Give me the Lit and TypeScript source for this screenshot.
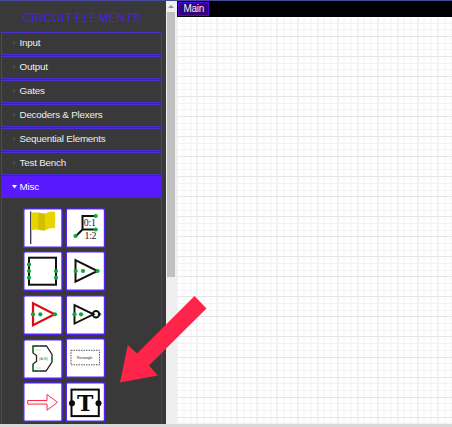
import { LitElement, html, css, svg } from "lit";
import { customElement } from "lit/decorators.js";

const dot = (x: number, y: number, r = 2.1) => svg`<circle cx=${x} cy=${y} r=${r} fill="#0fa838" />`;

const icons = [
  svg`<path d="M7.700 3.500V36" stroke="#34344a" stroke-width="1.300"/>
    <path d="M8.700 5C14 2.500 19 7.500 24 4.700C27 3.200 30 3.100 32 4V20.500C28 19.500 26 20.500 23 22C18 24 14 19.500 8.700 22.500Z" fill="#e6d500"/>
    <path d="M15 4.200Q19 6 22 5.500V22.300Q19 22.500 15 21Z" fill="#d2b900" opacity=".8"/>`,
  svg`<path d="M30 8H17V21.500H30M17 21.500L10.500 28" fill="none" stroke="#111" stroke-width="2"/>
    ${dot(30.2, 8)}${dot(30.2, 21.5)}${dot(10, 28)}
    <text x="18.300" y="17.800" class="nums" textLength="12">0:1</text><text x="19" y="31.300" class="nums" textLength="12">1:2</text>`,
  svg`<rect x="6" y="7" width="27" height="27" fill="none" stroke="#111" stroke-width="2"/>
    ${dot(6, 13.8)}${dot(6, 20.3)}${dot(6, 27)}${dot(33, 20.3)}${dot(33, 27)}`,
  svg`<path d="M10 9.500L32 20.300L10 31Z" fill="none" stroke="#111" stroke-width="2"/>
    ${dot(10.2, 20.3)}${dot(17.5, 20.3)}${dot(32, 20.3)}`,
  svg`<path d="M10 8.500L31.500 19.500L10 30.500Z" fill="none" stroke="#df0914" stroke-width="2.200"/>
    ${dot(10, 19.5)}${dot(17.3, 19.5)}${dot(32, 19.5)}`,
  svg`<path d="M9 10.300L28 19.500L9 28.700Z" fill="none" stroke="#111" stroke-width="1.900"/>
    ${dot(9, 19.5)}${dot(15.5, 19.5)}${dot(34, 19.5, 1.8)}
    <circle cx="30.500" cy="19.500" r="3.200" fill="none" stroke="#111" stroke-width="2"/>`,
  svg`<path d="M10 7.500H23.500L29 16V23.500L23 32.500H10V25.500L13.500 23V17L10 14.500Z" fill="none" stroke="#222" stroke-width="1.300"/>
    <path d="M10 7.500V14M10 26V32.500M28.800 18V22" stroke="#117c30" stroke-width="1"/>
    ${dot(16, 7.5, 1)}${dot(10, 10.5, 1)}${dot(10, 29.5, 1)}${dot(16, 32.5, 1)}${dot(29, 20, 1)}
    <path d="M12.500 11.500H18M12.500 29.500H18" stroke="#bbb" stroke-width=".6"/>
    <text x="15.800" y="21.300" class="alu">(A,B)</text>`,
  svg`<rect x="5.500" y="12.500" width="28.500" height="14.500" fill="none" stroke="#555" stroke-width="1" stroke-dasharray="1.500 1"/>
    <text x="19.200" y="21" class="rect">Rectangle</text>`,
  svg`<path d="M4.700 18.200H24V12.200L34.500 20L24 28V21.800H4.700Z" fill="none" stroke="#ff2b48" stroke-width="1"/>`,
  svg`<rect x="6" y="7.300" width="27.300" height="26.500" fill="none" stroke="#090909" stroke-width="2"/>
    <circle cx="6.500" cy="21" r="3" fill="#090909"/><circle cx="33" cy="21" r="3" fill="#090909"/>
    <text x="19.800" y="28.800" class="tee">T</text>`,
];

const iconShift = [0, -0.3, -0.2, -0.5, 0.3];

// Canvas lines sit on whole pixels; every third one is a major line.
const gridLines = (first: number, limit: number) => {
  const lines: { at: number; color: string }[] = [];
  for (let k = 0; first + (k * 20.04) / 3 < limit; k++) {
    lines.push({ at: Math.floor(first + (k * 20.04) / 3) + 0.5, color: k % 3 === 0 ? "#e5e5e7" : "#f2f2f2" });
  }
  return lines.sort((a, b) => (a.color < b.color ? 1 : -1));
};

@customElement("app-root")
export class AppRoot extends LitElement {
  static styles = css`
    :host { display: flex; flex-direction: column; position: relative; width: 452px; height: 427px; overflow: hidden; box-sizing: border-box; font-family: "Liberation Sans", Arial, sans-serif; border-top: 1px solid #46469c; background: #fff; }
    .body { display: flex; height: 423px; }
    .side { width: 166px; background: #393939; overflow: hidden; flex: none; }
    .title { height: 31px; padding-left: 22px; }
    .title text { font-size: 12.4px; fill: #4b1bf4; }
    .title svg { display: block; }
    .row { display: flex; align-items: center; width: 161px; height: 23px; margin: 0 0 1px 1px; box-sizing: border-box; border: 1px solid #4a30ce; color: #eee; font-size: 9.8px; letter-spacing: -.2px; padding: 0 0 2px 10px; white-space: nowrap; }
    .row svg { width: 5px; height: 6px; margin-right: 2.5px; flex: none; }
    .open { height: 22px; margin-bottom: 0; background: #5819ff; border-color: #5819ff; color: #fff; padding-bottom: 1px; }
    .panel { width: 161px; height: 226px; margin-left: 1px; box-sizing: border-box; border: 1px solid #4a30ce; border-width: 0 1px; padding: 10px 0 0 21px; display: grid; grid-template-columns: 42px 43px; grid-template-rows: 43px 44px 44px 43px 44px; }
    .cell svg { display: block; }
    .raised { margin: -1px 0 1px; }
    .nums { font: 9.8px "Liberation Serif", serif; fill: #222; }
    .alu { font: 4px "Liberation Sans", sans-serif; fill: #16985e; }
    .rect { font: 3.4px "Liberation Sans", sans-serif; fill: #222; text-anchor: middle; }
    .tee { font: bold 22px "DejaVu Serif", serif; fill: #090909; text-anchor: middle; }
    .scroll { width: 10.5px; flex: none; background: #efefef; display: flex; flex-direction: column; align-items: center; }
    .scroll svg { width: 6px; height: 3px; margin: 4px 0 4px; }
    .thumb { width: 8px; height: 265px; background: #c0c0c0; }
    .main { flex: 1; display: flex; flex-direction: column; }
    .tabs { height: 16px; background: #000; padding: 1px 0 0 1px; box-sizing: border-box; }
    .tab { width: 31.5px; height: 14px; box-sizing: border-box; border: 1px solid #5008df; background: #35027c; color: #eee; font-size: 10px; letter-spacing: -.3px; line-height: 12px; text-align: center; padding-left: 1px; }
    .canvas { flex: 1; width: 100%; display: block; min-height: 0; }
    .foot { height: 3px; background: #d8d8d8; }
    .arrow { position: absolute; left: 0; top: -1px; pointer-events: none; }
  `;

  row(name: string, open = false) {
    return html`<div class="row ${open ? "open" : ""}">
      <svg viewBox="0 0 5 6">${open
        ? svg`<path d="M0 1H5L2.500 4.500Z" fill="#fff"/>`
        : svg`<path d="M1.500 1L4 3L1.500 5Z" fill="#505050"/>`}</svg>${name}</div>`;
  }

  cell(index: number) {
    const shift = index === 7 ? -0.2 : iconShift[Math.floor(index / 2)];
    const left = index % 2 ? 0.5 : 0;
    return html`<div class="cell ${index === 7 ? "raised" : ""}"><svg width="42" height="42">
      <g transform="translate(${left} 0)">
        <rect x=".8" y=".9" width="38.200" height="38.400" rx="1.300" fill="#fff" stroke="#5423f5" stroke-width="1.400"/>
        <g transform="translate(0 ${shift})">${icons[index]}</g>
      </g></svg></div>`;
  }

  render() {
    return html`
      <div class="body">
        <div class="side">
          <div class="title"><svg width="130" height="31"><text x=".5" y="21" textLength="118.500" lengthAdjust="spacingAndGlyphs">CIRCUIT ELEMENTS</text></svg></div>
          ${["Input", "Output", "Gates", "Decoders & Plexers", "Sequential Elements", "Test Bench"].map((n) => this.row(n))}
          ${this.row("Misc", true)}
          <div class="panel">${icons.map((_, n) => this.cell(n))}</div>
        </div>
        <div class="scroll"><svg viewBox="0 0 6 3"><path d="M0 3L3 0L6 3Z" fill="#929292"/></svg><div class="thumb"></div></div>
        <div class="main">
          <div class="tabs"><div class="tab">Main</div></div>
          <svg class="canvas"><g transform="translate(.5 0)">
            ${gridLines(-0.2, 276).map((l) => svg`<path d="M${l.at} 0V407" stroke=${l.color} />`)}
            ${gridLines(-0.65, 407).map((l) => svg`<path d="M0 ${l.at}H276" stroke=${l.color} />`)}
          </g></svg>
        </div>
      </div>
      <div class="foot"></div>
      <svg class="arrow" width="452" height="427"><path d="M194.500 296L206.500 308.500L149 365.500L157.700 375.500L120 382.500L127.800 345L137 353.500Z" fill="#ff2449"/></svg>
    `;
  }
}
